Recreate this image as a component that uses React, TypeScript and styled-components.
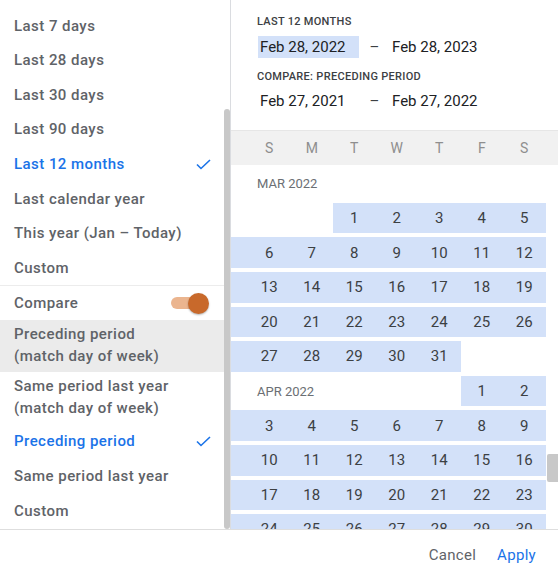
import React, { useCallback, useLayoutEffect, useRef, useState } from 'react';
import styled, { createGlobalStyle } from 'styled-components';

const BLUE = '#1a73e8';
const RANGE = '#d3e1f9';
const TEXT = '#5f6368';

const MONTHS = ['JAN', 'FEB', 'MAR', 'APR', 'MAY', 'JUN', 'JUL', 'AUG', 'SEP', 'OCT', 'NOV', 'DEC'];
const WEEKDAYS = ['S', 'M', 'T', 'W', 'T', 'F', 'S'];
const RANGE_START = new Date(2022, 1, 28).getTime();
const RANGE_END = new Date(2023, 1, 28).getTime();
const FIRST_YEAR = 2017;

type Row = { id: string; year: number; month: number; label?: string; span: number; days: (number | null)[] };

const buildMonth = (year: number, month: number): Row[] => {
    const first = new Date(year, month, 1).getDay();
    const count = new Date(year, month + 1, 0).getDate();
    const label = `${MONTHS[month]} ${year}`;
    const shares = first >= 3;
    const rows: Row[] = [];
    if (!shares) rows.push({ id: `${label}-h`, year, month, label, span: 8, days: [] });
    let day = 1 - first;
    let firstRow = true;
    while (day <= count) {
        const start = day;
        const days = Array.from({ length: 7 }, (_, i) => (start + i >= 1 && start + i <= count ? start + i : null));
        rows.push({ id: `${label}-${day}`, year, month, label: shares && firstRow ? label : undefined, span: first + 1, days });
        firstRow = false;
        day += 7;
    }
    return rows;
};

const allRows: Row[] = [];
for (let y = FIRST_YEAR; y <= 2023; y++) {
    for (let m = 0; m < 12; m++) {
        if (y === 2023 && m > 1) break;
        allRows.push(...buildMonth(y, m));
    }
}

const inRange = (row: Row, d: number | null) => {
    if (d === null) return false;
    const t = new Date(row.year, row.month, d).getTime();
    return t >= RANGE_START && t <= RANGE_END;
};

// thumb size and place from the scroll box, scrollbars are drawn by hand
const useThumb = (ref: React.RefObject<HTMLDivElement | null>, min: number) => {
    const [thumb, setThumb] = useState({ top: 0, height: 0 });
    const update = useCallback(() => {
        const el = ref.current;
        if (!el) return;
        const { scrollTop, scrollHeight, clientHeight } = el;
        const height = Math.max(min, (clientHeight * clientHeight) / scrollHeight);
        const max = scrollHeight - clientHeight;
        const top = max > 0 ? (scrollTop / max) * (clientHeight - height) : 0;
        setThumb({ top, height });
    }, [ref, min]);
    return [thumb, update] as const;
};

const Check = () => (
    <svg width="15" height="11" viewBox="0 0 15 11" fill="none">
        <path d="M1 5.5 L5 9.5 L14 1" stroke={BLUE} strokeWidth="1.6" />
    </svg>
);

export default function App() {
    const listRef = useRef<HTMLDivElement>(null);
    const bodyRef = useRef<HTMLDivElement>(null);
    const marRef = useRef<HTMLDivElement>(null);
    const [listThumb, updateList] = useThumb(listRef, 20);
    const [bodyThumb, updateBody] = useThumb(bodyRef, 28);

    useLayoutEffect(() => {
        if (listRef.current) listRef.current.scrollTop = listRef.current.scrollHeight;
        if (bodyRef.current && marRef.current) bodyRef.current.scrollTop = marRef.current.offsetTop - 3.4;
        updateList();
        updateBody();
    }, [updateList, updateBody]);

    return (
        <>
            <GlobalStyle />
            <Picker>
                <Main>
                    <PresetPane>
                        <Presets ref={listRef} onScroll={updateList}>
                            <Option>Today</Option>
                            <Option>Yesterday</Option>
                            <Option>This week (Sun – Today)</Option>
                            <Option>Last week (Sun – Sat)</Option>
                            <Option>Last 7 days</Option>
                            <Option>Last 28 days</Option>
                            <Option>Last 30 days</Option>
                            <Option>Last 90 days</Option>
                            <Option $selected>Last 12 months <Check /></Option>
                            <Option>Last calendar year</Option>
                            <Option>This year (Jan – Today)</Option>
                            <Option>Custom</Option>
                            <CompareRow>
                                Compare
                                <Switch>
                                    <Track />
                                    <Knob />
                                </Switch>
                            </CompareRow>
                            <Option $twoLine $shaded>Preceding period<br />(match day of week)</Option>
                            <Option $twoLine>Same period last year<br />(match day of week)</Option>
                            <Option $selected>Preceding period <Check /></Option>
                            <Option>Same period last year</Option>
                            <Option>Custom</Option>
                        </Presets>
                        <Thumb $width={6} style={{ top: listThumb.top, height: listThumb.height }} />
                    </PresetPane>
                    <Calendar>
                        <RangeHeader>
                            <RangeLabel>Last 12 months</RangeLabel>
                            <DateRow $gap={6}>
                                <DateField $active>Feb 28, 2022</DateField>
                                <Dash>–</Dash>
                                <DateField>Feb 28, 2023</DateField>
                            </DateRow>
                            <RangeLabel $gap={10.5}>Compare: preceding period</RangeLabel>
                            <DateRow $gap={5.5}>
                                <DateField>Feb 27, 2021</DateField>
                                <Dash>–</Dash>
                                <DateField>Feb 27, 2022</DateField>
                            </DateRow>
                        </RangeHeader>
                        <Weekdays>
                            <span />
                            {WEEKDAYS.map((w, i) => <Weekday key={i}>{w}</Weekday>)}
                        </Weekdays>
                        <BodyPane>
                            <Body ref={bodyRef} onScroll={updateBody}>
                                {allRows.map(row => (
                                    <Week key={row.id} ref={row.id === 'MAR 2022-h' ? marRef : undefined}>
                                        {row.label
                                            ? <MonthName $span={row.span}>{row.label}</MonthName>
                                            : <Lead $on={inRange(row, row.days[0])} />}
                                        {row.days.map((d, i) =>
                                            row.label && i < row.span - 1 ? null : (
                                                <Day key={i} $on={inRange(row, d)}>{d}</Day>
                                            )
                                        )}
                                    </Week>
                                ))}
                            </Body>
                            <Thumb $width={11} $square style={{ top: bodyThumb.top, height: bodyThumb.height }} />
                        </BodyPane>
                    </Calendar>
                </Main>
                <Footer>
                    <Action>Cancel</Action>
                    <Action $primary>Apply</Action>
                </Footer>
            </Picker>
        </>
    );
}

const GlobalStyle = createGlobalStyle`
    html, body {
        margin: 0;
        padding: 0;
        background: #fff;
    }
    body {
        font-family: Roboto, "Liberation Sans", Arial, sans-serif;
    }
    * {
        box-sizing: border-box;
    }
`
const Picker = styled.div`
    width: 558px;
    height: 575px;
    display: flex;
    flex-direction: column;
    background: #fff;
`
const Main = styled.div`
    display: flex;
    height: 530px;
    border-bottom: 1px solid #dedede;
`
const PresetPane = styled.div`
    position: relative;
    width: 231px;
    flex-shrink: 0;
    border-right: 1px solid #dadce0;
`
const Presets = styled.div`
    height: 100%;
    padding: 8px 0 1.5px;
    overflow-y: scroll;
    scrollbar-width: none;

    &::-webkit-scrollbar {
        display: none;
    }
`
const Thumb = styled.div<{ $width: number; $square?: boolean }>`
    position: absolute;
    right: 0;
    width: ${p => p.$width}px;
    border-radius: ${p => (p.$square ? '2px 0 0 2px' : '3px')};
    background: #c8c8c8;
`
const Option = styled.div<{ $selected?: boolean; $shaded?: boolean; $twoLine?: boolean }>`
    display: flex;
    align-items: center;
    justify-content: space-between;
    padding: ${p => (p.$twoLine ? '3px 19px 5px 14px' : '6.3px 19px 6.3px 14px')};
    font-size: 15px;
    font-weight: 500;
    line-height: 22px;
    letter-spacing: 0.45px;
    color: ${p => (p.$selected ? BLUE : TEXT)};
    background: ${p => (p.$shaded ? '#ebebeb' : 'transparent')};
    white-space: nowrap;

    svg {
        flex-shrink: 0;
    }
`
const CompareRow = styled.div`
    display: flex;
    align-items: center;
    justify-content: space-between;
    height: 35px;
    padding: 0 21px 0 14px;
    border-top: 1px solid #ececec;
    font-size: 15px;
    font-weight: 500;
    letter-spacing: 0.45px;
    color: ${TEXT};
`
const Switch = styled.span`
    position: relative;
    display: inline-flex;
    align-items: center;
    width: 38px;
    height: 21px;
`
const Track = styled.span`
    width: 30px;
    height: 12px;
    border-radius: 6px;
    background: #ebb58f;
`
const Knob = styled.span`
    position: absolute;
    top: 0;
    right: 0;
    width: 21px;
    height: 21px;
    border-radius: 50%;
    background: #c8692b;
    box-shadow: 0 1px 2px rgba(0, 0, 0, 0.3);
`
const Calendar = styled.div`
    flex: 1;
    min-width: 0;
    display: flex;
    flex-direction: column;
`
const RangeHeader = styled.div`
    height: 130px;
    flex-shrink: 0;
    padding: 14px 0 0 26px;
`
const RangeLabel = styled.div<{ $gap?: number }>`
    margin-top: ${p => p.$gap ?? 0}px;
    font-size: 11px;
    font-weight: 500;
    line-height: 16px;
    letter-spacing: 0.3px;
    text-transform: uppercase;
    color: #3c4043;
`
const DateRow = styled.div<{ $gap: number }>`
    display: flex;
    margin-top: ${p => p.$gap}px;
    padding-left: 1px;
    height: 22px;
`
const DateField = styled.div<{ $active?: boolean }>`
    width: 101px;
    padding-left: 2px;
    font-size: 15px;
    line-height: 22px;
    color: #202124;
    background: ${p => (p.$active ? RANGE : 'transparent')};
`
const Dash = styled.div`
    width: 31px;
    text-align: center;
    font-size: 15px;
    line-height: 22px;
    color: #3c4043;
`
const Weekdays = styled.div`
    display: grid;
    grid-template-columns: 17px repeat(7, 42.5px);
    align-items: center;
    height: 35px;
    flex-shrink: 0;
    border-top: 1px solid #e6e6e6;
    background: #f1f1f1;
`
const Weekday = styled.span`
    text-align: center;
    font-size: 14px;
    color: #8e8e8e;
`
const BodyPane = styled.div`
    position: relative;
    flex: 1;
    min-height: 0;
`
const Body = styled.div`
    position: relative;
    height: 100%;
    overflow-y: scroll;
    scrollbar-width: none;

    &::-webkit-scrollbar {
        display: none;
    }
`
const Week = styled.div`
    display: grid;
    grid-template-columns: 17px repeat(7, 42.5px);
    height: 30.6px;
    margin-bottom: 4px;
`
const Lead = styled.span<{ $on: boolean }>`
    background: ${p => (p.$on ? RANGE : 'transparent')};
`
const Day = styled.span<{ $on: boolean }>`
    display: flex;
    align-items: center;
    justify-content: center;
    font-size: 15px;
    color: #3c4043;
    background: ${p => (p.$on ? RANGE : 'transparent')};
`
const MonthName = styled.span<{ $span: number }>`
    grid-column: 1 / span ${p => p.$span};
    display: flex;
    align-items: center;
    padding-left: 26px;
    font-size: 13px;
    color: #6b6f74;
    white-space: nowrap;
`
const Footer = styled.div`
    display: flex;
    align-items: center;
    justify-content: flex-end;
    gap: 21px;
    height: 45px;
    padding: 5px 22px 0 0;
`
const Action = styled.span<{ $primary?: boolean }>`
    font-size: 15px;
    font-weight: 400;
    letter-spacing: 0.3px;
    color: ${p => (p.$primary ? BLUE : TEXT)};
    cursor: pointer;
`
